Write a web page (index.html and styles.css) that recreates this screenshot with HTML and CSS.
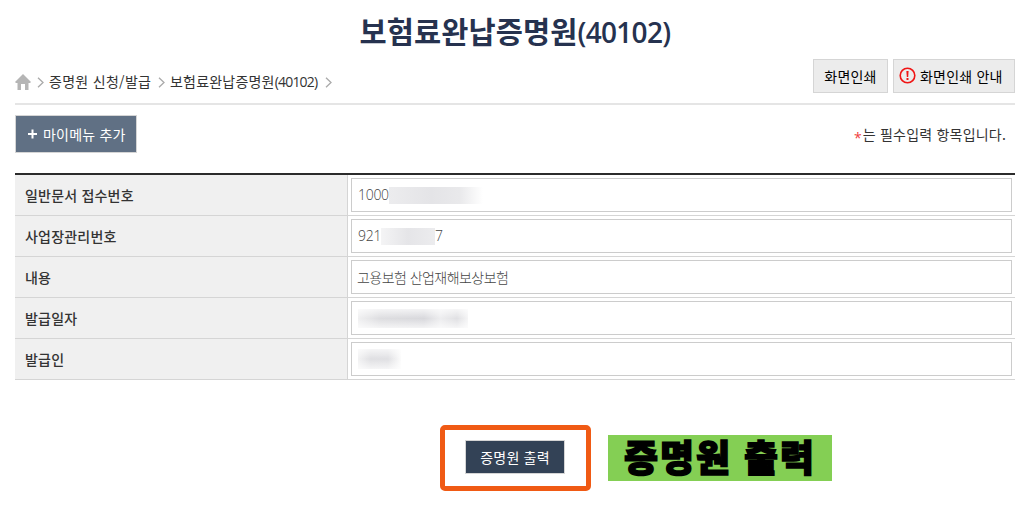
FILE: index.html
```
<!DOCTYPE html>
<html lang="ko">

<head>
    <meta charset="UTF-8">
    <meta name="viewport" content="width=device-width, initial-scale=1.0">
    <title>보험료완납증명원(40102)</title>
    <link rel="stylesheet" href="styles.css">
</head>

<body>
    <h1>보험료완납증명원<span class="num">(40102)</span></h1>

    <div class="location">
        <div class="path">
            <svg class="home" width="16" height="16" viewBox="0 0 16 16"><path d="M8 0L16 8L15 9H13.5V16H10V10H6V16H2.5V9H1L0 8Z" fill="#b5b5b5"/></svg>
            <svg class="arrow" width="7" height="11" viewBox="0 0 7 11"><path d="M1 .7L6 5.5L1 10.3"/></svg>
            <a class="menu1">증명원 신청/발급</a>
            <svg class="arrow" width="7" height="11" viewBox="0 0 7 11"><path d="M1 .7L6 5.5L1 10.3"/></svg>
            <a class="menu2">보험료완납증명원<span class="num">(40102)</span></a>
            <svg class="arrow" width="7" height="11" viewBox="0 0 7 11"><path d="M1 .7L6 5.5L1 10.3"/></svg>
        </div>
        <div class="print">
            <button type="button" class="btn_print">화면인쇄</button>
            <button type="button" class="btn_print btn_info">
                <svg width="17" height="17" viewBox="0 0 17 17"><circle cx="8.5" cy="8.5" r="7.3" fill="none" stroke="#f01414" stroke-width="1.6"/><path d="M7.4 4H9.6L9.2 10H7.8Z" fill="#f01414"/><rect x="7.5" y="11" width="2" height="2" fill="#f01414"/></svg>
                화면인쇄 안내
            </button>
        </div>
    </div>

    <div class="tools">
        <button type="button" class="btn_add">
            <svg width="9" height="10" viewBox="0 0 9 10"><path d="M4.5 .5V9.5M0 5H9" stroke="#fff" stroke-width="2"/></svg>
            마이메뉴 추가
        </button>
        <p class="notice"><em>*</em>는 필수입력 항목입니다.</p>
    </div>

    <table>
        <tr>
            <th>일반문서 접수번호</th>
            <td><div class="field"><span class="digit">1000</span><i class="mask mask1"></i></div></td>
        </tr>
        <tr>
            <th>사업장관리번호</th>
            <td><div class="field"><span class="digit">921</span><i class="mask mask2"></i><span class="digit">7</span></div></td>
        </tr>
        <tr>
            <th>내용</th>
            <td><div class="field"><span class="text">고용보험 산업재해보상보험</span></div></td>
        </tr>
        <tr>
            <th>발급일자</th>
            <td><div class="field"><i class="mask mask3"></i></div></td>
        </tr>
        <tr>
            <th>발급인</th>
            <td><div class="field"><i class="mask mask4"></i></div></td>
        </tr>
    </table>

    <div class="bottom">
        <div class="highlight">
            <button type="button" class="btn_output">증명원 출력</button>
        </div>
        <strong class="label">증명원 출력</strong>
    </div>
</body>

</html>
```
FILE: styles.css
```
* {
    box-sizing: border-box;
}

body {
    margin: 0;
    padding: 0 20px 0 15px;
    height: 516px;
    overflow: hidden;
    background-color: #fff;
    color: #333;
    font: 14px/20px "Noto Sans CJK KR", sans-serif;
    letter-spacing: 0.2px;
}

button {
    margin: 0;
    padding: 0 0 1px;
    font-family: inherit;
    font-size: 14px;
    line-height: 20px;
    letter-spacing: 0.2px;
}

h1 {
    margin: 0;
    height: 59px;
    padding-top: 10px;
    line-height: 40px;
    font-size: 29.5px;
    font-weight: 700;
    letter-spacing: 0.1px;
    color: #26324f;
    text-align: center;
}

h1 .num {
    font: 600 28px/30px "Open Sans", sans-serif;
    letter-spacing: -0.7px;
}

.location {
    display: flex;
    justify-content: space-between;
    height: 46px;
    border-bottom: 2px solid #e5e5e5;
}

.path {
    display: flex;
    align-items: center;
    height: 46px;
    white-space: nowrap;
}

.path a {
    padding-bottom: 2px;
}

.arrow {
    fill: none;
    stroke: #aaa;
    stroke-width: 1.3;
}

.home {
    margin-right: 6px;
}

.menu1 {
    width: 102px;
    margin: 0 7px 0 5px;
    letter-spacing: 0.3px;
}

.menu2 {
    width: 149px;
    margin: 0 6px 0 5px;
    letter-spacing: 0.2px;
}

.path .num {
    font-family: "Open Sans", sans-serif;
    font-size: 14px;
    letter-spacing: -0.8px;
}

.print {
    display: flex;
    gap: 5px;
}

.btn_print {
    width: 75px;
    height: 34px;
    border: 1px solid #d5d5d5;
    background-color: #ececec;
    color: #000;
}

.btn_info {
    display: flex;
    align-items: center;
    gap: 4px;
    width: 122px;
    padding-left: 5px;
    white-space: nowrap;
}

.tools {
    display: flex;
    justify-content: space-between;
    height: 68px;
    padding-top: 10px;
}

.btn_add {
    display: flex;
    align-items: center;
    gap: 6px;
    width: 122px;
    height: 38px;
    padding-left: 12px;
    border: 1px solid #d5d5d5;
    background-color: #607084;
    color: #fff;
}

.notice {
    margin: 9px 9px 0 0;
    letter-spacing: 0.2px;
}

.notice em {
    display: inline-block;
    margin-right: 1px;
    font-family: "Open Sans", sans-serif;
    font-style: normal;
    line-height: 16px;
    vertical-align: -3px;
    color: #f04040;
}

table {
    width: 1000px;
    border-collapse: separate;
    border-spacing: 0;
    border-top: 2px solid #2b2b2b;
    table-layout: fixed;
}

th {
    width: 333px;
    padding: 0 0 1px 10px;
    border-right: 1px solid #d5d5d5;
    border-bottom: 1px solid #d5d5d5;
    background-color: #f0f0f0;
    font-weight: 500;
    text-align: left;
}

td {
    height: 41px;
    padding: 3px;
    border-bottom: 1px solid #d5d5d5;
}

.field {
    display: flex;
    align-items: center;
    height: 34px;
    padding-left: 6px;
    border: 1px solid #ccc;
    color: #444;
    font-weight: 300;
}

.text {
    padding-bottom: 1px;
    margin-left: -1px;
    letter-spacing: -0.55px;
}

.digit {
    font-family: "Open Sans", sans-serif;
    letter-spacing: -0.3px;
}

.mask {
    height: 17px;
}

.mask1 {
    width: 94px;
    background: linear-gradient(to right, #ececee, #e4e4e7 45%, #e9e9eb 75%, #fff);
}

.mask2 {
    width: 54px;
    background: linear-gradient(to right, #f4f4f5, #e5e5e8 50%, #ececee);
}

.mask3 {
    width: 110px;
    height: 19px;
    background: linear-gradient(to bottom, rgba(255, 255, 255, .7), transparent 50%, rgba(255, 255, 255, .7)), linear-gradient(to right, #f0f0f1, #dddde0 20%, #d8d8dc 60%, #ededef 75%, #e0e0e3 90%, #f5f5f6);
}

.mask4 {
    width: 43px;
    height: 20px;
    background: linear-gradient(to bottom, rgba(255, 255, 255, .7), transparent 50%, rgba(255, 255, 255, .7)), linear-gradient(to right, #f2f2f3, #dfdfe2 30%, #e0e0e3 70%, #fcfcfc);
}

.bottom {
    display: flex;
    align-items: center;
    gap: 17px;
    height: 66px;
    margin: 45px 0 0 425px;
}

.highlight {
    display: flex;
    width: 151px;
    height: 66px;
    padding: 10px 0 0 20px;
    border: 5px solid #f05a14;
    border-radius: 5px;
}

.btn_output {
    width: 100px;
    height: 34px;
    border: 1px solid #d5d5d5;
    background-color: #334256;
    color: #fff;
}

.label {
    width: 224px;
    height: 46px;
    background-color: #84cf54;
    color: #000;
    font-size: 37px;
    font-weight: 900;
    line-height: 42px;
    letter-spacing: 1.9px;
    text-align: center;
    -webkit-text-stroke: 1.5px #000;
}
```
